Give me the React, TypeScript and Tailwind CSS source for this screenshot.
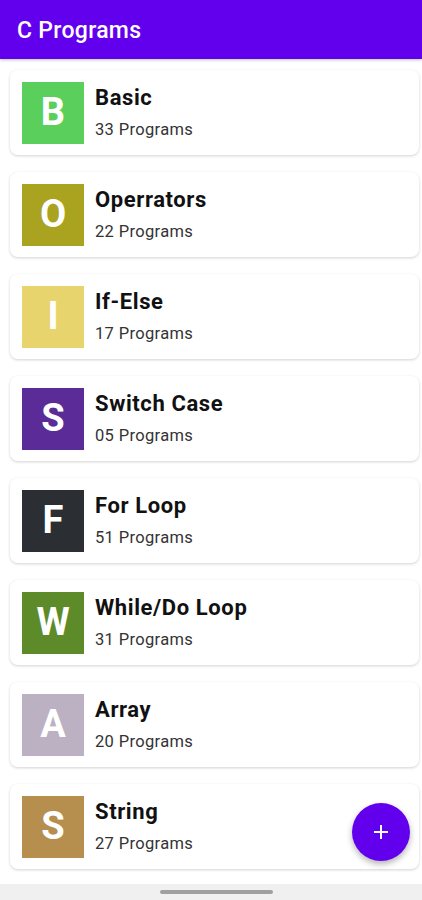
import React from "react";

const items = [
  { l: "B", t: "Basic", n: "33", c: "bg-[#5bcf5b]" },
  { l: "O", t: "Operrators", n: "22", c: "bg-[#aaa320]" },
  { l: "I", t: "If-Else", n: "17", c: "bg-[#e8d46c]" },
  { l: "S", t: "Switch Case", n: "05", c: "bg-[#5b2b98]" },
  { l: "F", t: "For Loop", n: "51", c: "bg-[#2b2e33]" },
  { l: "W", t: "While/Do Loop", n: "31", c: "bg-[#5e8b29]" },
  { l: "A", t: "Array", n: "20", c: "bg-[#bcb1c2]" },
  { l: "S", t: "String", n: "27", c: "bg-[#b68f4f]" },
];

export default function App() {
  return (
    <div className="relative w-[422px] h-[900px] bg-white overflow-hidden" style={{ fontFamily: "Roboto, 'Liberation Sans', sans-serif" }}>
      <div className="h-[59px] bg-[#6200ee] flex items-center px-[17px] pt-[4px] shadow-[0_1px_3px_rgba(0,0,0,0.25)]">
        <span className="text-white text-[23px] font-medium tracking-[0.3px]">C Programs</span>
      </div>
      <div className="flex flex-col gap-[17px] pt-[11px] pl-[10px] pr-[3px]">
        {items.map((it, i) => (
          <div key={i} className="h-[85px] rounded-[8px] bg-white shadow-[0_1px_3px_rgba(0,0,0,0.18)] flex items-center pl-[12px]">
            <div className={`w-[62px] h-[62px] ${it.c} flex items-center justify-center text-white text-[38px] font-bold`}>{it.l}</div>
            <div className="ml-[11px] flex flex-col">
              <span className="text-[22px] font-bold text-[#111] leading-[24px] tracking-[0.6px]">{it.t}</span>
              <span className="text-[16.5px] text-[#333] leading-[18px] mt-[11px] tracking-[0.35px]">{it.n} Programs</span>
            </div>
          </div>
        ))}
      </div>
      <div className="absolute left-[352px] top-[803px] w-[58px] h-[58px] rounded-full bg-[#6200ee] shadow-[0_3px_6px_rgba(0,0,0,0.3)] flex items-center justify-center">
        <svg width="18" height="18" viewBox="0 0 18 18"><path d="M9 2v14M2 9h14" stroke="white" strokeWidth="2" /></svg>
      </div>
      <div className="absolute left-0 bottom-0 w-full h-[16px] bg-[#f0f0f0]">
        <div className="absolute left-[160px] top-[6px] w-[113px] h-[4px] rounded-full bg-[#a0a0a0]" />
      </div>
    </div>
  );
}
